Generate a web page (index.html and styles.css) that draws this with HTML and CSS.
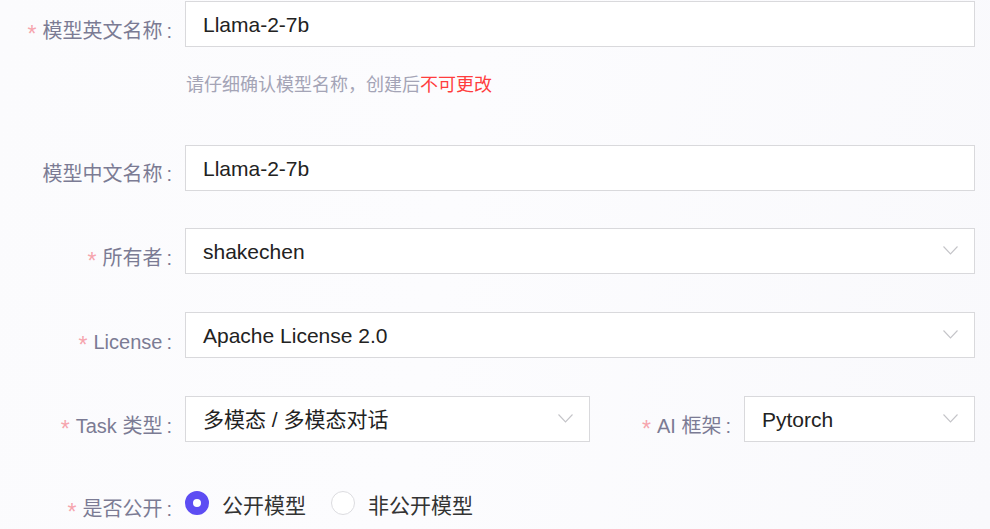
FILE: index.html
```html
<!DOCTYPE html>
<html lang="zh">
<head>
<meta charset="utf-8">
<link rel="stylesheet" href="styles.css">
</head>
<body>
<form class="form">
  <div class="item item-first">
    <label class="label"><span class="req">*</span>模型英文名称<span class="colon">:</span></label>
    <div class="control">
      <div class="input">Llama-2-7b</div>
      <div class="hint">请仔细确认模型名称，创建后<span class="hint-red">不可更改</span></div>
    </div>
  </div>
  <div class="item item-second">
    <label class="label">模型中文名称<span class="colon">:</span></label>
    <div class="control"><div class="input">Llama-2-7b</div></div>
  </div>
  <div class="item">
    <label class="label"><span class="req">*</span>所有者<span class="colon">:</span></label>
    <div class="control"><div class="input select">shakechen<svg class="chev" width="15" height="9" viewBox="0 0 15 9"><path d="M0.5 0.5 L7.5 8 L14.5 0.5" fill="none" stroke="#c4c4c8" stroke-width="1.1"/></svg></div></div>
  </div>
  <div class="item">
    <label class="label"><span class="req">*</span>License<span class="colon">:</span></label>
    <div class="control"><div class="input select">Apache License 2.0<svg class="chev" width="15" height="9" viewBox="0 0 15 9"><path d="M0.5 0.5 L7.5 8 L14.5 0.5" fill="none" stroke="#c4c4c8" stroke-width="1.1"/></svg></div></div>
  </div>
  <div class="item">
    <label class="label"><span class="req">*</span>Task 类型<span class="colon">:</span></label>
    <div class="control control-task"><div class="input select">多模态 / 多模态对话<svg class="chev" width="15" height="9" viewBox="0 0 15 9"><path d="M0.5 0.5 L7.5 8 L14.5 0.5" fill="none" stroke="#c4c4c8" stroke-width="1.1"/></svg></div></div>
    <label class="label label-ai"><span class="req">*</span>AI 框架<span class="colon">:</span></label>
    <div class="control"><div class="input select">Pytorch<svg class="chev" width="15" height="9" viewBox="0 0 15 9"><path d="M0.5 0.5 L7.5 8 L14.5 0.5" fill="none" stroke="#c4c4c8" stroke-width="1.1"/></svg></div></div>
  </div>
  <div class="item item-radio">
    <label class="label"><span class="req">*</span>是否公开<span class="colon">:</span></label>
    <div class="control radios">
      <span class="radio"><span class="dot dot-on"></span>公开模型</span>
      <span class="radio"><span class="dot"></span>非公开模型</span>
    </div>
  </div>
</form>
</body>
</html>
```

FILE: styles.css
```css
html, body {
  margin: 0;
  padding: 0;
}
body {
  width: 990px;
  height: 529px;
  overflow: hidden;
  background: linear-gradient(100deg, #fbfbfd 0%, #fcfcfe 45%, #f9f9fc 100%);
  font-family: "Liberation Sans", "Noto Sans CJK SC", sans-serif;
}
.form {
  padding: 1px 15px 0 0;
  display: flex;
  flex-direction: column;
}
.item {
  display: flex;
  align-items: flex-start;
  margin-bottom: 38px;
}
.item-first {
  margin-bottom: 48px;
}
.item-second {
  margin-bottom: 37px;
}
.label {
  flex: 0 0 175px;
  width: 175px;
  margin-right: 10px;
  text-align: right;
  box-sizing: border-box;
  height: 46px;
  line-height: 46px;
  padding-top: 6px;
  font-size: 20px;
  color: #7b7b94;
  white-space: nowrap;
}
.req {
  color: #f6a5ae;
  font-size: 23px;
  margin-right: 6px;
  position: relative;
  top: 4px;
}
.colon {
  margin-left: 4px;
  margin-right: 3px;
}
.control {
  flex: 1 1 auto;
  min-width: 0;
}
.control-task {
  flex: 0 0 405px;
}
.label-ai {
  flex: 0 0 144px;
  width: 144px;
}
.input {
  box-sizing: border-box;
  height: 46px;
  line-height: 44px;
  padding: 2px 17px 0 17px;
  border: 1px solid #d9d9dc;
  background: #fff;
  font-size: 21px;
  color: #222;
  display: flex;
  align-items: center;
}
.select {
  justify-content: space-between;
}
.chev {
  margin-top: -3px;
  margin-right: -1px;
  flex: 0 0 auto;
}
.hint {
  margin-top: 26px;
  font-size: 18px;
  line-height: 24px;
  color: #a4a4b6;
  padding-left: 1px;
}
.hint-red {
  color: #ff3d3d;
}
.item-radio .label {
  padding-top: 5px;
}
.radios {
  display: flex;
  align-items: center;
  height: 46px;
  gap: 25px;
}
.radio {
  display: inline-flex;
  align-items: center;
  gap: 13px;
  font-size: 21px;
  color: #333;
  padding-top: 2px;
}
.dot {
  width: 24px;
  height: 24px;
  border-radius: 50%;
  box-sizing: border-box;
  border: 1.5px solid #dcdce0;
  background: #fff;
  margin-top: -2px;
}
.dot-on {
  border: 8px solid #5d4df3;
  background: #fff;
}
```
